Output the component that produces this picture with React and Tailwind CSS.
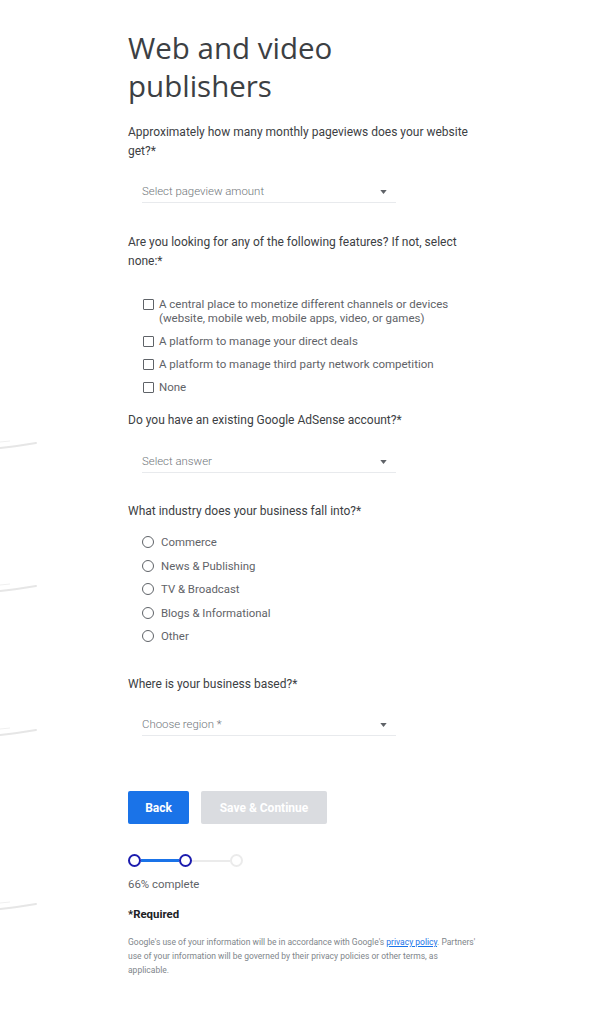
const features = [
  'A central place to monetize different channels or devices (website, mobile web, mobile apps, video, or games)',
  'A platform to manage your direct deals',
  'A platform to manage third party network competition',
  'None',
]

const industries = ['Commerce', 'News & Publishing', 'TV & Broadcast', 'Blogs & Informational', 'Other']

const strokeMarks = [445, 588, 732, 906]

function Question({ children, className = '' }) {
  return <p className={`text-[12px] leading-[19px] text-[#3c4043] ${className}`}>{children}</p>
}

function SelectField({ placeholder, className = '' }) {
  return (
    <div className={`ml-[14px] flex w-[254px] items-center justify-between border-b border-[#e8eaed] pb-[1px] ${className}`}>
      <span className="text-[11.4px] font-light leading-[19px] text-[#70757a]">{placeholder}</span>
      <svg width="7" height="4" viewBox="0 0 8 5" className="mr-[9px]">
        <path d="M0 0h8L4 5z" fill="#5f6368" />
      </svg>
    </div>
  )
}

export default function App() {
  return (
    <div className="relative min-h-[1024px] bg-white" style={{ fontFamily: 'Roboto, "Liberation Sans", sans-serif' }}>
      {/* faint decorative strokes on the left edge */}
      {strokeMarks.map(y => (
        <svg key={y} width="40" height="12" viewBox="0 0 40 12" className="absolute left-0" style={{ top: y - 6 }}>
          <path d="M0 9 C12 8 24 6 36 4" stroke="#e6e6e6" strokeWidth="2" fill="none" strokeLinecap="round" />
          <path d="M0 3 L10 2" stroke="#f0f0f0" strokeWidth="1" fill="none" />
        </svg>
      ))}

      <div className="ml-[128px] w-[340px] pt-[29px] pb-[40px]">
        <h1
          className="text-[29.5px] leading-[38px] text-[#3c4043]"
          style={{ fontFamily: '"Open Sans", Roboto, sans-serif' }}
        >
          Web and video publishers
        </h1>

        <Question className="mt-[18px]">Approximately how many monthly pageviews does your website get?*</Question>
        <SelectField placeholder="Select pageview amount" className="mt-[21px]" />

        <Question className="mt-[30px]">Are you looking for any of the following features? If not, select none:*</Question>
        <div className="mt-[26px] ml-[15px] flex flex-col gap-[9px]">
          {features.map(f => (
            <label key={f} className="flex items-start gap-[5px]">
              <span className="mt-[1.5px] h-[11px] w-[11px] shrink-0 rounded-[1px] border-[1.5px] border-[#5f6368]" />
              <span className="w-[290px] text-[11.5px] leading-[14px] text-[#5f6368]">{f}</span>
            </label>
          ))}
        </div>

        <Question className="mt-[17px]">Do you have an existing Google AdSense account?*</Question>
        <SelectField placeholder="Select answer" className="mt-[22px]" />

        <Question className="mt-[29px]">What industry does your business fall into?*</Question>
        <div className="mt-[13px] ml-[14px] flex flex-col gap-[7.5px]">
          {industries.map(i => (
            <label key={i} className="flex items-center gap-[7px]">
              <span className="h-[12px] w-[12px] shrink-0 rounded-full border-[1.5px] border-[#5f6368]" />
              <span className="text-[11.4px] leading-[16px] text-[#5f6368]">{i}</span>
            </label>
          ))}
        </div>

        <Question className="mt-[31px]">Where is your business based?*</Question>
        <SelectField placeholder="Choose region *" className="mt-[21px]" />

        <div className="mt-[55px] flex gap-[12px]">
          <button className="h-[33px] w-[61px] rounded-[2px] bg-[#1a73e8] text-[12px] font-bold text-white">Back</button>
          <button className="h-[33px] w-[126px] rounded-[2px] bg-[#dadce0] text-[12px] font-bold text-white">
            Save &amp; Continue
          </button>
        </div>

        <div className="mt-[30px] flex items-center">
          <span className="h-[13px] w-[13px] rounded-full border-[2.5px] border-[#1c1cae] bg-white" />
          <span className="h-[3px] w-[38px] bg-[#1a73e8]" />
          <span className="h-[13px] w-[13px] rounded-full border-[2.5px] border-[#1c1cae] bg-white" />
          <span className="h-[2px] w-[38px] bg-[#ebebeb]" />
          <span className="h-[13px] w-[13px] rounded-full border-[2px] border-[#ebebeb] bg-white" />
        </div>
        <p className="mt-[9px] text-[11.4px] leading-[16px] text-[#5f6368]">66% complete</p>

        <p className="mt-[14px] text-[11.4px] font-bold leading-[16px] text-[#202124]">*Required</p>

        <p className="mt-[13px] w-[348px] text-[8.5px] leading-[14px] text-[#80868b]">
          Google's use of your information will be in accordance with Google's{' '}
          <a className="text-[#1a73e8] underline">privacy policy</a>. Partners' use of your information will be
          governed by their privacy policies or other terms, as applicable.
        </p>
      </div>
    </div>
  )
}
